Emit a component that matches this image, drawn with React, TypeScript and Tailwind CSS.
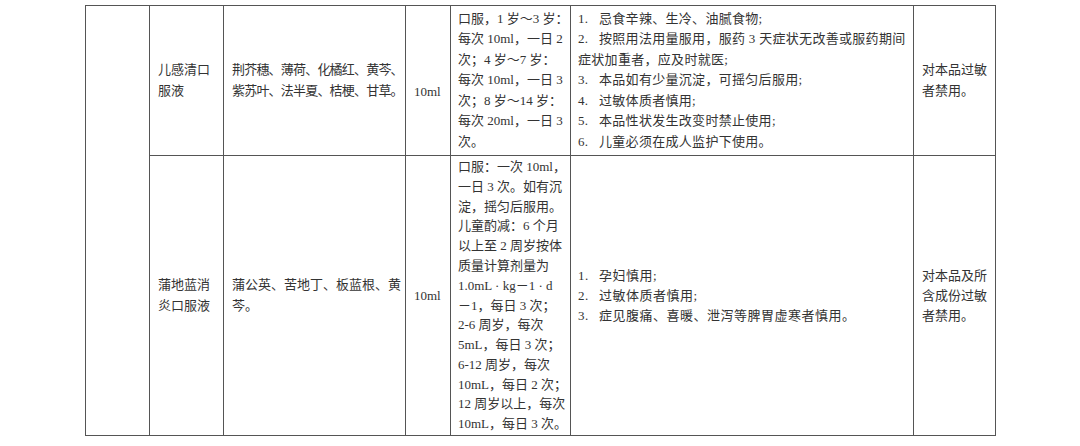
import React from 'react';

const font = "font-['Liberation_Serif','Noto_Sans_CJK_SC',serif]";
const cell = 'border border-[#555] align-middle px-[7px] py-0';

const Item = ({ n, children }: { n: string; children: React.ReactNode }) => (
  <div className="whitespace-nowrap">
    <span className="inline-block w-[21px]">{n}</span>
    {children}
  </div>
);

const App = () => {
  const dose1 = [
    '口服，1 岁～3 岁：',
    '每次 10ml，一日 2',
    '次；4 岁～7 岁：',
    '每次 10ml，一日 3',
    '次；8 岁～14 岁：',
    '每次 20ml，一日 3',
    '次。',
  ];
  const dose2 = [
    '口服：一次 10ml，',
    '一日 3 次。如有沉',
    '淀，摇匀后服用。',
    '儿童酌减：6 个月',
    '以上至 2 周岁按体',
    '质量计算剂量为',
    '1.0mL · kg－1 · d',
    '－1，每日 3 次；',
    '2-6 周岁，每次',
    '5mL，每日 3 次；',
    '6-12 周岁，每次',
    '10mL，每日 2 次；',
    '12 周岁以上，每次',
    '10mL，每日 3 次。',
  ];

  return (
    <div className={`min-h-[446px] w-[1080px] bg-white pl-[85px] pt-[5px] text-[13px] text-[#333] ${font}`}>
      <table className="w-[910px] table-fixed border-collapse">
        <colgroup>
          <col className="w-[64px]" />
          <col className="w-[74px]" />
          <col className="w-[182px]" />
          <col className="w-[45px]" />
          <col className="w-[120px]" />
          <col className="w-[343px]" />
          <col className="w-[82px]" />
        </colgroup>
        <tbody>
          <tr className="h-[150px]">
            <td rowSpan={2} className={cell}></td>
            <td className={`${cell} px-[8px] leading-[20.5px]`}>
              儿感清口
              <br />
              服液
            </td>
            <td className={`${cell} px-[8px] leading-[20.5px] tracking-[-0.8px]`}>
              <div className="whitespace-nowrap">荆芥穗、薄荷、化橘红、黄芩、</div>
              <div className="whitespace-nowrap">紫苏叶、法半夏、桔梗、甘草。</div>
            </td>
            <td className={`${cell} px-[8px] pt-[22px]`}>10ml</td>
            <td className={`${cell} leading-[20.5px]`}>
              {dose1.map((l, i) => (
                <div key={i} className="whitespace-nowrap">{l}</div>
              ))}
            </td>
            <td className={`${cell} pr-[10px] leading-[20.5px] tracking-[0.3px]`}>
              <Item n="1.">忌食辛辣、生冷、油腻食物;</Item>
              <div className="whitespace-nowrap text-justify [text-align-last:justify]">
                <span className="inline-block w-[21px]">2.</span>按照用法用量服用，服药 3 天症状无改善或服药期间
              </div>
              <div className="whitespace-nowrap">症状加重者，应及时就医;</div>
              <Item n="3.">本品如有少量沉淀，可摇匀后服用;</Item>
              <Item n="4.">过敏体质者慎用;</Item>
              <Item n="5.">本品性状发生改变时禁止使用;</Item>
              <Item n="6.">儿童必须在成人监护下使用。</Item>
            </td>
            <td className={`${cell} px-[8px] leading-[20.5px]`}>
              对本品过敏
              <br />
              者禁用。
            </td>
          </tr>
          <tr className="h-[280px]">
            <td className={`${cell} px-[8px] leading-[20.5px]`}>
              蒲地蓝消
              <br />
              炎口服液
            </td>
            <td className={`${cell} px-[8px] leading-[20.5px]`}>
              <div className="whitespace-nowrap">蒲公英、苦地丁、板蓝根、黄</div>
              <div>芩。</div>
            </td>
            <td className={`${cell} px-[8px]`}>10ml</td>
            <td className={`${cell} leading-[19.8px]`}>
              {dose2.map((l, i) => (
                <div key={i} className="whitespace-nowrap">{l}</div>
              ))}
            </td>
            <td className={`${cell} leading-[20px] tracking-[0.5px]`}>
              <Item n="1.">孕妇慎用;</Item>
              <Item n="2.">过敏体质者慎用;</Item>
              <Item n="3.">症见腹痛、喜暖、泄泻等脾胃虚寒者慎用。</Item>
            </td>
            <td className={`${cell} px-[8px] leading-[20px]`}>
              对本品及所
              <br />
              含成份过敏
              <br />
              者禁用。
            </td>
          </tr>
        </tbody>
      </table>
    </div>
  );
};

export default App;
